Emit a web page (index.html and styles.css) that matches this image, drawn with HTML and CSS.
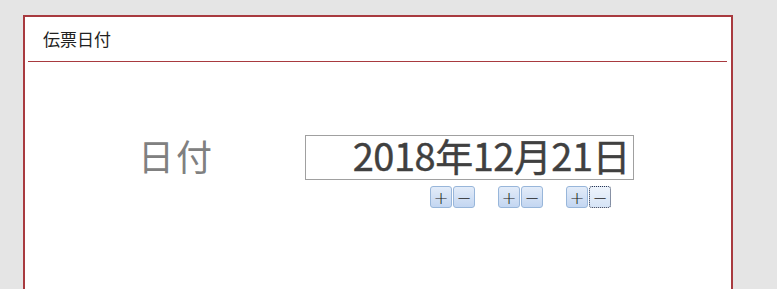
FILE: index.html
```html
<!DOCTYPE html>
<html lang="ja">
<head>
<meta charset="utf-8">
<link rel="stylesheet" href="styles.css">
</head>
<body>
<div class="panel">
  <div class="header"><span class="title">伝票日付</span></div>
  <div class="content">
    <div class="row">
      <div class="label">日付</div>
      <div class="field">
        <div class="input">2018年12月21日</div>
        <div class="spinners">
          <div class="pair"><button class="btn">+</button><button class="btn">−</button></div>
          <div class="pair"><button class="btn">+</button><button class="btn">−</button></div>
          <div class="pair"><button class="btn">+</button><button class="btn focus">−</button></div>
        </div>
      </div>
    </div>
  </div>
</div>
</body>
</html>
```
FILE: styles.css
```css
html, body {
  margin: 0;
  padding: 0;
  background: #e5e5e5;
  font-family: "Noto Sans CJK JP", "Liberation Sans", sans-serif;
  overflow: hidden;
}
.panel {
  margin: 15px 0 0 23px;
  width: 710px;
  height: calc(100vh - 15px);
  box-sizing: border-box;
  border: 2px solid #a83a3f;
  border-bottom: none;
  background: #fff;
}
.header {
  height: 44px;
  margin: 0 4px 0 3px;
  border-bottom: 1px solid #a83a3f;
  display: flex;
  align-items: center;
  padding-left: 15px;
}
.title {
  font-size: 17px;
  color: #222;
  line-height: 1;
  margin-top: -1px;
}
.content {
  padding-top: 73px;
}
.row {
  display: flex;
  align-items: flex-start;
}
.label {
  margin-left: 113px;
  width: 167px;
  height: 45px;
  font-size: 36px;
  line-height: 40px;
  color: #808080;
  letter-spacing: 2px;
}
.field {
  display: flex;
  flex-direction: column;
}
.input {
  box-sizing: border-box;
  width: 329px;
  height: 45px;
  border: 1px solid #a0a0a0;
  font-size: 38px;
  line-height: 37px;
  text-align: right;
  color: #404040;
  padding-right: 3px;
  letter-spacing: -0.5px;
  -webkit-text-stroke: 0.4px #404040;
}
.spinners {
  display: flex;
  margin-top: 6px;
  margin-left: 125px;
  gap: 23px;
}
.pair {
  display: flex;
  gap: 1px;
}
.btn {
  box-sizing: border-box;
  width: 22px;
  height: 22px;
  padding: 0;
  border: 1px solid #98b6da;
  border-radius: 3px;
  background: linear-gradient(#e3ecf9, #c3d6f1);
  font-family: "DejaVu Sans", sans-serif;
  font-weight: 200;
  font-size: 18px;
  line-height: 19px;
  color: #222;
  text-align: center;
}
.btn.focus {
  border: 1px dotted #2a3550;
  background: linear-gradient(#eef4fc, #d6e4f6);
}
```
